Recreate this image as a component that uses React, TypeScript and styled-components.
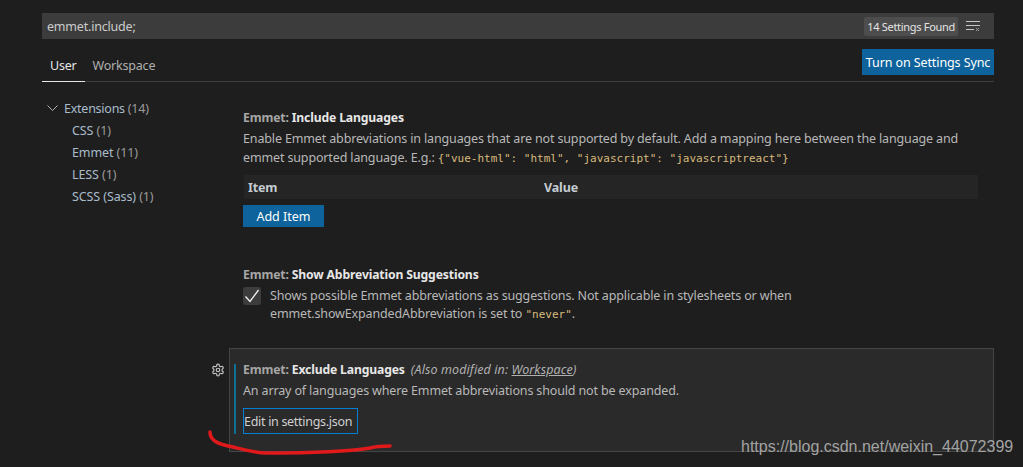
import React from 'react';
import styled, { createGlobalStyle } from 'styled-components';

const GlobalStyle = createGlobalStyle`
  html, body {
    margin: 0;
    padding: 0;
    height: 467px;
    overflow: hidden;
    background: #1e1e1e;
  }
  body {
    font-family: "Noto Sans", "Open Sans", sans-serif;
    font-size: 12.5px;
    letter-spacing: -0.14px;
    color: #cccccc;
  }
`;

const Page = styled.div`
  position: relative;
  height: 467px;
  box-sizing: border-box;
  padding: 13px 29px 0 42px;
  overflow: hidden;
`;

const SearchBar = styled.div`
  height: 26px;
  background: #3c3c3c;
  display: flex;
  align-items: center;
  padding: 0 13px 0 5px;
  font-size: 12.5px;
  letter-spacing: -0.2px;
  color: #cccccc;
`;

const SearchText = styled.span`
  flex: 1;
`;

const CountBadge = styled.span`
  background: #4d4d4d;
  border-radius: 2px;
  height: 19px;
  line-height: 19px;
  padding: 0 3px;
  font-size: 11px;
  letter-spacing: -0.3px;
  color: #e4e4e4;
  margin-right: 8px;
  margin-top: 1px;
`;

const HeaderRow = styled.div`
  height: 43px;
  box-sizing: border-box;
  border-bottom: 1px solid #3f3f3f;
  display: flex;
  justify-content: space-between;
  align-items: flex-start;
`;

const Tabs = styled.div`
  display: flex;
  height: 43px;
`;

const Tab = styled.div<{ $active?: boolean }>`
  box-sizing: border-box;
  height: 43px;
  padding: 18px 8px 0;
  line-height: 18px;
  font-size: 12.5px;
  letter-spacing: -0.2px;
  color: ${(p) => (p.$active ? '#e7e7e7' : '#b0b0b0')};
  border-bottom: 1px solid ${(p) => (p.$active ? '#e7e7e7' : 'transparent')};
`;

const SyncButton = styled.button`
  margin-top: 10px;
  width: 132px;
  height: 26px;
  border: 0;
  padding: 0;
  background: #0e639c;
  color: #ffffff;
  font: inherit;
  letter-spacing: -0.1px;
`;

const Body = styled.div`
  display: flex;
`;

const Tree = styled.div`
  width: 187px;
  flex: none;
  padding-top: 15px;
`;

const TreeRow = styled.div<{ $child?: boolean }>`
  display: flex;
  align-items: center;
  height: 22px;
  padding-left: ${(p) => (p.$child ? '30px' : '5px')};
  color: #a9bcca;
  gap: 6px;
  letter-spacing: ${(p) => (p.$child ? '-0.1px' : '-0.25px')};
`;

const Count = styled.span`
  color: #9a9a9a;
`;

const Settings = styled.div`
  flex: 1;
  min-width: 0;
`;

const Item = styled.div`
  padding: 26px 16px 0 14px;
  line-height: 19px;
`;

const SecondItem = styled(Item)`
  padding-top: 38px;
`;

const Title = styled.div`
  font-weight: 700;
  font-size: 12.2px;
  letter-spacing: -0.15px;
  color: #e7e7e7;
  height: 19px;
  margin-bottom: 2px;
`;

const Category = styled.span`
  color: #a6a6a6;
`;

const Description = styled.div`
  color: #b8b8b8;
`;

const ShortDescription = styled(Description)`
  line-height: 18px;
`;

const Code = styled.span`
  font-family: "DejaVu Sans Mono", "Liberation Mono", monospace;
  font-size: 11px;
  line-height: 1;
  letter-spacing: 0;
  color: #d7ba7d;
`;

const TableHead = styled.div`
  margin: 8px 0 0 1px;
  height: 24px;
  background: #252525;
  display: grid;
  grid-template-columns: 296px 1fr;
  align-items: center;
  padding-left: 4px;
  font-weight: 700;
  color: #c4ccd2;
`;

const AddButton = styled.button`
  display: block;
  margin-top: 6px;
  width: 81px;
  height: 22px;
  border: 0;
  padding: 0;
  background: #0e639c;
  color: #ffffff;
  font: inherit;
`;

const CheckRow = styled.div`
  display: flex;
  gap: 9px;
  width: 590px;
  padding-top: 1px;
`;

const CheckBox = styled.div`
  width: 18px;
  height: 18px;
  flex: none;
  border-radius: 3px;
  background: #3c3c3c;
  display: flex;
  align-items: center;
  justify-content: center;
`;

const FocusedWrap = styled.div`
  position: relative;
  margin-top: 25px;
  height: 104px;
  box-sizing: border-box;
  border: 1px solid #454545;
  background: #2a2a2a;
  padding: 11px 0 0 13px;
`;

const GearSlot = styled.div`
  position: absolute;
  left: -19px;
  top: 14px;
  width: 14px;
  height: 14px;
  color: #c5c5c5;
`;

const FocusedInner = styled.div`
  line-height: 19px;

  &::before {
    content: '';
    position: absolute;
    left: 4px;
    top: 15px;
    width: 2px;
    height: 70px;
    background: #0f6f94;
  }
`;

const Modified = styled.span`
  font-weight: 400;
  font-size: 12.5px;
  font-style: italic;
  letter-spacing: 0.1px;
  color: #b0b0b0;
  margin-left: 6px;
`;

const ModifiedLink = styled.span`
  text-decoration: underline;
`;

const EditButton = styled.button`
  display: block;
  margin-top: 8px;
  width: 115px;
  height: 26px;
  box-sizing: border-box;
  border: 1px solid #007fd4;
  padding: 0;
  background: transparent;
  color: #d0d0d0;
  font: inherit;
  letter-spacing: -0.3px;
  text-align: left;
  white-space: nowrap;
`;

const Scribble = styled.svg`
  position: absolute;
  left: 205px;
  top: 425px;
`;

const Watermark = styled.div`
  position: absolute;
  left: 741px;
  top: 437px;
  font-family: "Liberation Sans", Arial, sans-serif;
  font-size: 16px;
  letter-spacing: 0;
  line-height: 20px;
  color: #a3a3a3;
`;

const Chevron = () => (
  <svg width="11" height="6" viewBox="0 0 11 6" fill="none">
    <path d="M0.5 0.5L5.5 5.5L10.5 0.5" stroke="#b4b4b4" strokeWidth="1" />
  </svg>
);

const ClearIcon = () => (
  <svg width="15" height="12" viewBox="0 0 15 12" fill="none" stroke="#c5c5c5" strokeWidth="1">
    <path d="M0 1.5H14M0 5.5H14M0 9.5H8" />
    <path d="M10 8L13 11M13 8L10 11" stroke="#9a9a9a" />
  </svg>
);

const Check = () => (
  <svg width="16" height="14" viewBox="0 0 16 14" fill="none">
    <path d="M1.5 7.5L6 12.5L14.5 1" stroke="#ececec" strokeWidth="1.4" />
  </svg>
);

const Gear = () => (
  <svg width="14" height="14" viewBox="0 0 24 24" fill="none" stroke="currentColor" strokeWidth="2" strokeLinecap="round" strokeLinejoin="round">
    <path d="M12.22 2h-.44a2 2 0 0 0-2 2v.18a2 2 0 0 1-1 1.73l-.43.25a2 2 0 0 1-2 0l-.15-.08a2 2 0 0 0-2.73.73l-.22.38a2 2 0 0 0 .73 2.73l.15.1a2 2 0 0 1 1 1.72v.51a2 2 0 0 1-1 1.74l-.15.09a2 2 0 0 0-.73 2.73l.22.38a2 2 0 0 0 2.73.73l.15-.08a2 2 0 0 1 2 0l.43.25a2 2 0 0 1 1 1.73V20a2 2 0 0 0 2 2h.44a2 2 0 0 0 2-2v-.18a2 2 0 0 1 1-1.73l.43-.25a2 2 0 0 1 2 0l.15.08a2 2 0 0 0 2.73-.73l.22-.39a2 2 0 0 0-.73-2.73l-.15-.08a2 2 0 0 1-1-1.74v-.5a2 2 0 0 1 1-1.74l.15-.09a2 2 0 0 0 .73-2.73l-.22-.38a2 2 0 0 0-2.73-.73l-.15.08a2 2 0 0 1-2 0l-.43-.25a2 2 0 0 1-1-1.73V4a2 2 0 0 0-2-2z" />
    <circle cx="12" cy="12" r="3" />
  </svg>
);

const App: React.FC = () => {
  return (
    <Page>
      <GlobalStyle />
      <SearchBar>
        <SearchText>emmet.include;</SearchText>
        <CountBadge>14 Settings Found</CountBadge>
        <ClearIcon />
      </SearchBar>
      <HeaderRow>
        <Tabs>
          <Tab $active>User</Tab>
          <Tab>Workspace</Tab>
        </Tabs>
        <SyncButton>Turn on Settings Sync</SyncButton>
      </HeaderRow>
      <Body>
        <Tree>
          <TreeRow>
            <Chevron />
            <span>
              Extensions <Count>(14)</Count>
            </span>
          </TreeRow>
          <TreeRow $child>
            <span>
              CSS <Count>(1)</Count>
            </span>
          </TreeRow>
          <TreeRow $child>
            <span>
              Emmet <Count>(11)</Count>
            </span>
          </TreeRow>
          <TreeRow $child>
            <span>
              LESS <Count>(1)</Count>
            </span>
          </TreeRow>
          <TreeRow $child>
            <span>
              SCSS (Sass) <Count>(1)</Count>
            </span>
          </TreeRow>
        </Tree>
        <Settings>
          <Item>
            <Title>
              <Category>Emmet: </Category>Include Languages
            </Title>
            <Description>
              Enable Emmet abbreviations in languages that are not supported by default. Add a mapping here between the language and
              <br />
              emmet supported language. E.g.: <Code>{'{"vue-html": "html", "javascript": "javascriptreact"}'}</Code>
            </Description>
            <TableHead>
              <span>Item</span>
              <span>Value</span>
            </TableHead>
            <AddButton>Add Item</AddButton>
          </Item>
          <SecondItem>
            <Title>
              <Category>Emmet: </Category>Show Abbreviation Suggestions
            </Title>
            <CheckRow>
              <CheckBox>
                <Check />
              </CheckBox>
              <ShortDescription>
                Shows possible Emmet abbreviations as suggestions. Not applicable in stylesheets or when emmet.showExpandedAbbreviation is set to <Code>"never"</Code>.
              </ShortDescription>
            </CheckRow>
          </SecondItem>
          <FocusedWrap>
            <GearSlot>
              <Gear />
            </GearSlot>
            <FocusedInner>
              <Title>
                <Category>Emmet: </Category>Exclude Languages
                <Modified>
                  (Also modified in: <ModifiedLink>Workspace</ModifiedLink>)
                </Modified>
              </Title>
              <Description>An array of languages where Emmet abbreviations should not be expanded.</Description>
              <EditButton>Edit in settings.json</EditButton>
            </FocusedInner>
          </FocusedWrap>
        </Settings>
      </Body>
      <Scribble width="190" height="32" viewBox="0 0 190 32" fill="none">
        <path
          d="M5 7C5 14 10 19 28 22C40 25 50 28 62 28C100 28 140 27 165 23C172 21 178 21 185 21"
          stroke="#e0191b"
          strokeWidth="3.5"
          strokeLinecap="round"
        />
      </Scribble>
      <Watermark>https://blog.csdn.net/weixin_44072399</Watermark>
    </Page>
  );
};

export default App;
